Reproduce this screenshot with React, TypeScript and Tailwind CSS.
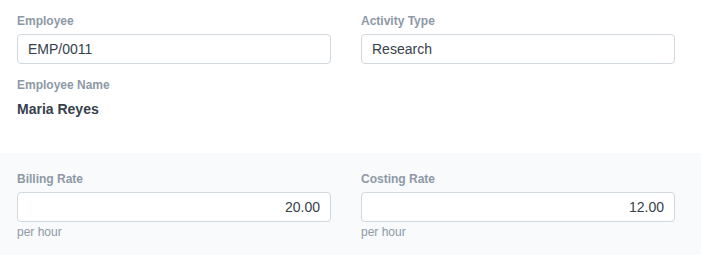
const labelCls = "block text-[12px] leading-[18px] font-bold text-[#8d99a6]";
const inputCls =
  "block w-full h-[30px] rounded-[4px] border border-[#d1d8dd] bg-white px-[10px] text-[14px] text-[#36414c] outline-none";

function Field({ label, value, align = "left", help }: { label: string; value: string; align?: "left" | "right"; help?: string }) {
  return (
    <div>
      <label className={labelCls}>{label}</label>
      <input
        readOnly
        value={value}
        className={`${inputCls} mt-[4px] ${align === "right" ? "text-right" : "text-left"}`}
      />
      {help && <p className="mt-px text-[12px] leading-[18px] text-[#8d99a6]">{help}</p>}
    </div>
  );
}

export default function App() {
  return (
    <div className="w-[701px] h-[255px] overflow-hidden bg-white" style={{ fontFamily: '"Liberation Sans", Arial, sans-serif' }}>
      <section className="h-[153px] px-[17px] pt-[12px]">
        <div className="grid grid-cols-[314px_314px] gap-x-[30px]">
          <div>
            <Field label="Employee" value="EMP/0011" />
            <div className="mt-[12px]">
              <label className={labelCls}>Employee Name</label>
              <p className="mt-[6px] text-[14px] leading-[18px] font-bold text-[#36414c]">Maria Reyes</p>
            </div>
          </div>
          <Field label="Activity Type" value="Research" />
        </div>
      </section>
      <section className="h-[102px] bg-[#f9fafb] px-[17px] pt-[17px]">
        <div className="grid grid-cols-[314px_314px] gap-x-[30px]">
          <Field label="Billing Rate" value="20.00" align="right" help="per hour" />
          <Field label="Costing Rate" value="12.00" align="right" help="per hour" />
        </div>
      </section>
    </div>
  );
}
